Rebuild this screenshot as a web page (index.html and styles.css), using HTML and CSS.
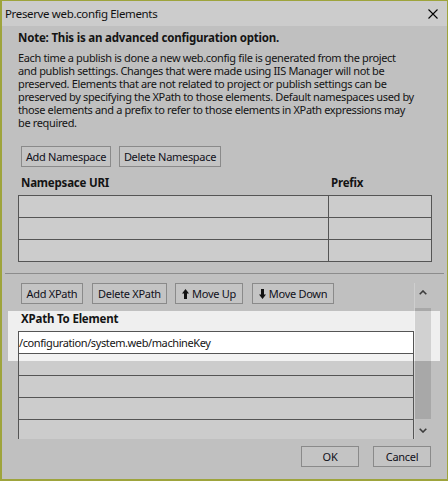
FILE: index.html
```html
<!DOCTYPE html>
<html>
<head>
<meta charset="utf-8">
<link rel="stylesheet" href="styles.css">
</head>
<body>
<div class="window">
  <div class="titlebar">
    <span class="title">Preserve web.config Elements</span>
    <svg class="close" width="10" height="10" viewBox="0 0 10 10"><path d="M0.5 0.5L9.5 9.5M9.5 0.5L0.5 9.5" stroke="#000" stroke-width="1.1" fill="none"/></svg>
  </div>
  <div class="top">
    <p class="note">Note: This is an advanced configuration option.</p>
    <p class="desc">Each time a publish is done a new web.config file is generated from the project<br>and publish settings. Changes that were made using IIS Manager will not be<br>preserved. Elements that are not related to project or publish settings can be<br>preserved by specifying the XPath to those elements. Default namespaces used by<br>those elements and a prefix to refer to those elements in XPath expressions may<br>be required.</p>
    <div class="btnrow">
      <button class="btn w-addns">Add Namespace</button>
      <button class="btn w-delns">Delete Namespace</button>
    </div>
    <div class="ns-head"><span>Namepsace URI</span><span>Prefix</span></div>
    <div class="ns-grid">
      <div class="cell"></div><div class="cell"></div>
      <div class="cell"></div><div class="cell"></div>
      <div class="cell"></div><div class="cell"></div>
    </div>
  </div>
  <div class="sep"></div>
  <div class="xp-region">
    <div class="xp-main">
      <div class="btnrow">
        <button class="btn w-addxp">Add XPath</button>
        <button class="btn w-delxp">Delete XPath</button>
        <button class="btn w-up"><svg class="arr" width="7" height="10" viewBox="0 0 7 10"><path d="M3.5 0L7 4.5H5V10H2V4.5H0Z" fill="#111"/></svg>Move Up</button>
        <button class="btn w-down"><svg class="arr" width="7" height="10" viewBox="0 0 7 10"><path d="M3.5 10L7 5.5H5V0H2V5.5H0Z" fill="#111"/></svg>Move Down</button>
      </div>
      <div class="xp-head">XPath To Element</div>
      <div class="xp-rows">
        <div class="xp-row sel">/configuration/system.web/machineKey</div>
        <div class="xp-row"></div>
        <div class="xp-row"></div>
        <div class="xp-row"></div>
        <div class="xp-row"></div>
        <div class="xp-row"></div>
      </div>
    </div>
    <div class="scrollbar">
      <div class="sb-btn up"><svg width="8" height="5" viewBox="0 0 8 5"><path d="M0.7 4.3L4 1L7.3 4.3" stroke="#3c3c3c" stroke-width="1.6" fill="none"/></svg></div>
      <div class="thumb"></div>
      <div class="sb-btn down"><svg width="8" height="5" viewBox="0 0 8 5"><path d="M0.7 0.7L4 4L7.3 0.7" stroke="#3c3c3c" stroke-width="1.6" fill="none"/></svg></div>
    </div>
  </div>
  <div class="footer">
    <button class="btn w-ok">OK</button>
    <button class="btn w-ok">Cancel</button>
  </div>
</div>
</body>
</html>
```

FILE: styles.css
```css
html, body {
  margin: 0;
  padding: 0;
  background: #c0c0c0;
}

.window {
  width: 448px;
  height: 481px;
  box-sizing: border-box;
  border: 1px solid #9ea43c;
  border-left-width: 2px;
  border-bottom-width: 2px;
  background: #c0c0c0;
  font-family: "Noto Sans", "DejaVu Sans", sans-serif;
  color: #141414;
  display: flex;
  flex-direction: column;
  overflow: hidden;
}

.titlebar {
  height: 25px;
  flex: none;
  background: #cccccc;
  display: flex;
  align-items: center;
  justify-content: space-between;
  padding: 0 9px 0 3px;
}

.title {
  font-size: 11.5px;
  letter-spacing: -0.35px;
  color: #111;
}

.close {
  display: block;
}

.top {
  flex: none;
  padding: 0 15px 0 16px;
}

.note {
  margin: 4px 0 0;
  font-weight: 700;
  font-size: 11.5px;
  letter-spacing: -0.2px;
  line-height: 16px;
  white-space: nowrap;
}

.desc {
  margin: 5px 0 0;
  font-size: 11px;
  letter-spacing: -0.36px;
  line-height: 13px;
  white-space: nowrap;
}

.btnrow {
  display: flex;
  gap: 8px;
  margin-left: 3px;
}

.top .btnrow {
  margin-top: 17px;
}

.btn {
  height: 21px;
  flex: none;
  box-sizing: border-box;
  border: 1px solid #8a8a8a;
  background: #c4c4c4;
  font-family: "Noto Sans", "DejaVu Sans", sans-serif;
  font-size: 11px;
  letter-spacing: -0.3px;
  color: #10101a;
  padding: 0;
  margin: 0;
  display: flex;
  align-items: center;
  justify-content: center;
  gap: 3px;
  white-space: nowrap;
}

.w-addns { width: 90px; }
.w-delns { width: 102px; }
.w-addxp { width: 62px; }
.w-delxp { width: 75px; margin-left: 1px; }
.w-up { width: 68px; }
.w-down { width: 82px; margin-left: 1px; }
.w-ok { width: 58px; }

.arr {
  display: block;
}

.ns-head {
  display: grid;
  grid-template-columns: 310px 1fr;
  padding-top: 8px;
  margin-bottom: 4px;
  font-weight: 700;
  font-size: 11.5px;
  letter-spacing: -0.2px;
  line-height: 16px;
}

.ns-head span {
  padding-left: 3px;
}

.ns-grid {
  width: 414px;
  box-sizing: border-box;
  display: grid;
  grid-template-columns: 309px 102px;
  grid-auto-rows: 21px;
  gap: 1px;
  padding: 1px;
  background: #555555;
}

.cell {
  background: #cccccc;
}

.sep {
  height: 1px;
  background: #8c8c8c;
  margin: 11px 3px 0 3px;
  flex: none;
}

.xp-region {
  flex: none;
  height: 165px;
  width: 432px;
  box-sizing: border-box;
  margin-left: 6px;
  padding: 9px 0 0 10px;
  display: flex;
  overflow: hidden;
  background: linear-gradient(#efefef, #efefef) no-repeat 0 37px / 100% 50px;
}

.xp-main {
  width: 396px;
  flex: none;
}

.xp-head {
  margin-top: 7px;
  margin-bottom: 4px;
  padding-left: 3px;
  font-weight: 700;
  font-size: 11.5px;
  letter-spacing: -0.2px;
  line-height: 16px;
}

.xp-rows {
  border-left: 1px solid #555555;
  border-right: 1px solid #555555;
}

.xp-row {
  height: 21px;
  border-top: 1px solid #555555;
  background: rgba(255, 255, 255, 0.2);
  font-size: 11px;
  letter-spacing: -0.4px;
  line-height: 21px;
  white-space: nowrap;
}

.xp-row.sel {
  background: #ffffff;
}

.scrollbar {
  width: 16px;
  flex: none;
  border-left: 1px solid rgba(255, 255, 255, 0.22);
  display: flex;
  flex-direction: column;
  align-items: stretch;
}

.sb-btn {
  display: flex;
  justify-content: center;
}

.sb-btn svg {
  display: block;
}

.sb-btn.up {
  height: 25px;
  padding-top: 7px;
  box-sizing: border-box;
}

.sb-btn.down {
  padding-top: 9px;
}

.thumb {
  height: 111px;
  background: rgba(0, 0, 0, 0.125);
}

.footer {
  flex: 1;
  display: flex;
  justify-content: flex-end;
  gap: 14px;
  padding: 7px 16px 0 0;
}
```
